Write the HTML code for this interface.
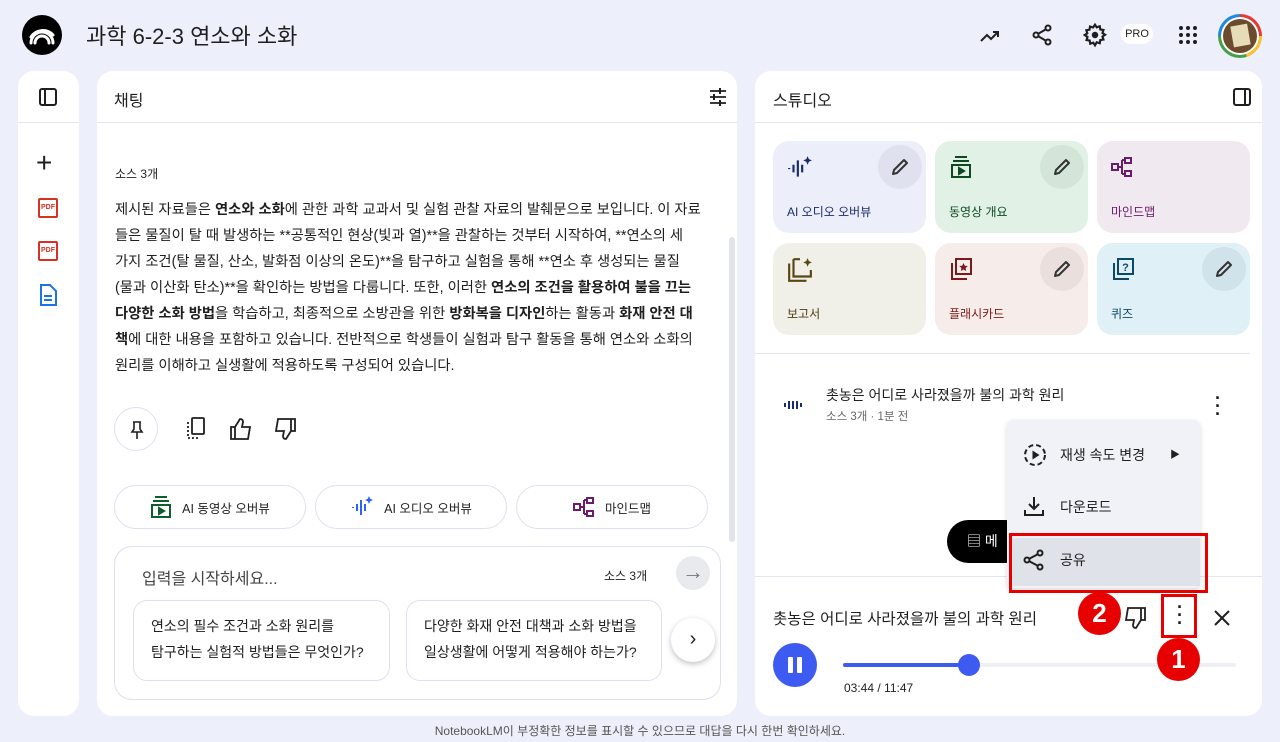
<!DOCTYPE html>
<html><head><meta charset="utf-8"><style>
*{box-sizing:border-box;margin:0;padding:0}
body{width:1280px;height:742px;background:#edeffa;font-family:"Liberation Sans","Noto Sans CJK KR",sans-serif;color:#1f1f1f;position:relative;overflow:hidden}
.a{position:absolute}
.panel{position:absolute;background:#fff;border-radius:16px;overflow:hidden}
.hdr{position:absolute;left:0;right:0;top:0;height:52px;border-bottom:1px solid #e3e6ef}
.card{position:absolute;width:153px;height:92px;border-radius:16px}
.card .lb{position:absolute;left:14px;top:62px;font-size:12px}
.card .ed{position:absolute;right:4px;top:4px;width:44px;height:44px;border-radius:50%}
.card .ed svg{position:absolute;left:13px;top:13px}
.pill{position:absolute;top:485px;height:44px;width:192px;border:1px solid #dde1ee;border-radius:22px;font-size:12.5px;display:flex;align-items:center;justify-content:center;gap:10px}
.line{white-space:nowrap}
b{font-weight:700}
</style></head><body>

<!-- top bar -->
<div class="a" style="left:22px;top:15px;width:40px;height:40px;border-radius:50%;background:#000">
<svg width="40" height="40" viewBox="0 0 40 40"><g fill="none" stroke="#fff" stroke-width="3" stroke-linecap="round"><path d="M9 28 A11 11 0 0 1 31 28"/><path d="M13 28 A7 7 0 0 1 27 28"/><path d="M9 22 A14 14 0 0 1 31 20"/></g></svg></div>
<div class="a" style="left:86px;top:19px;font-size:22px;color:#1f1f1f">과학 6-2-3 연소와 소화</div>
<svg class="a" style="left:978px;top:24px" width="24" height="24" viewBox="0 0 24 24"><path d="M3 17l6-6 4 4 7-7M15 8h5v5" fill="none" stroke="#1f1f1f" stroke-width="2"/></svg>
<svg class="a" style="left:1030px;top:23px" width="24" height="24" viewBox="0 0 24 24"><g fill="none" stroke="#1f1f1f" stroke-width="2"><circle cx="18" cy="5" r="2.5"/><circle cx="6" cy="12" r="2.5"/><circle cx="18" cy="19" r="2.5"/><path d="M8.2 10.8l7.6-4.4M8.2 13.2l7.6 4.4"/></g></svg>
<svg class="a" style="left:1082px;top:22px" width="26" height="26" viewBox="0 0 24 24"><path fill="none" stroke="#1f1f1f" stroke-width="2" d="M12 2.5l1.6 2.4 2.8-.9.5 2.9 2.9.5-.9 2.8 2.4 1.6-2.4 1.6.9 2.8-2.9.5-.5 2.9-2.8-.9L12 21.5l-1.6-2.4-2.8.9-.5-2.9-2.9-.5.9-2.8L2.5 12l2.4-1.6-.9-2.8 2.9-.5.5-2.9 2.8.9z"/><circle cx="12" cy="12" r="3" fill="#1f1f1f"/></svg>
<div class="a" style="left:1121px;top:24px;width:32px;height:20px;border-radius:10px;background:#fff;font-size:11px;line-height:20px;text-align:center">PRO</div>
<svg class="a" style="left:1178px;top:25px" width="20" height="20" viewBox="0 0 20 20" fill="#1f1f1f"><circle cx="3" cy="3" r="2"/><circle cx="10" cy="3" r="2"/><circle cx="17" cy="3" r="2"/><circle cx="3" cy="10" r="2"/><circle cx="10" cy="10" r="2"/><circle cx="17" cy="10" r="2"/><circle cx="3" cy="17" r="2"/><circle cx="10" cy="17" r="2"/><circle cx="17" cy="17" r="2"/></svg>
<div class="a" style="left:1218px;top:14px;width:44px;height:44px;border-radius:50%;background:conic-gradient(#e53935 0 25%,#fbc02d 25% 45%,#43a047 45% 75%,#1e88e5 75%)"></div>
<div class="a" style="left:1221px;top:17px;width:38px;height:38px;border-radius:50%;background:#fff"></div>
<div class="a" style="left:1223px;top:19px;width:34px;height:34px;border-radius:50%;background:#6b4a2e"><div class="a" style="left:9px;top:6px;width:17px;height:21px;background:#e6dcb8;transform:rotate(-10deg)"></div></div>

<!-- left panel -->
<div class="panel" style="left:18px;top:71px;width:61px;height:645px">
<div class="hdr"></div>
<svg class="a" style="left:21px;top:17px" width="18" height="18" viewBox="0 0 18 18"><rect x="1" y="1" width="16" height="16" rx="2" fill="none" stroke="#1f1f1f" stroke-width="2"/><path d="M6 1v16" stroke="#1f1f1f" stroke-width="2"/></svg>
<div class="a" style="left:18px;top:78px;font-size:28px;line-height:28px;font-weight:300">+</div>
<div class="a" style="left:20px;top:127px;width:20px;height:20px;border:2px solid #d93025;border-radius:2px;color:#d93025;font-size:7px;font-weight:700;line-height:16px;text-align:center">PDF</div>
<div class="a" style="left:20px;top:170px;width:20px;height:20px;border:2px solid #d93025;border-radius:2px;color:#d93025;font-size:7px;font-weight:700;line-height:16px;text-align:center">PDF</div>
<svg class="a" style="left:21px;top:213px" width="18" height="22" viewBox="0 0 18 22"><path d="M2 1h9l6 6v14H2z" fill="none" stroke="#1a73e8" stroke-width="2"/><path d="M5 12h8M5 16h8" stroke="#1a73e8" stroke-width="2"/></svg>
</div>

<!-- chat panel -->
<div class="panel" style="left:97px;top:71px;width:640px;height:645px">
<div class="hdr"></div>
<div class="a" style="left:17px;top:16px;font-size:16px">채팅</div>
<svg class="a" style="left:611px;top:16px" width="20" height="20" viewBox="0 0 20 20" stroke="#1f1f1f" stroke-width="1.8"><path d="M2 4h16M2 10h16M2 16h16"/><path d="M12 1v6M6 7v6M12 13v6" stroke-width="2"/></svg>
<div class="a" style="left:632px;top:166px;width:6px;height:305px;border-radius:3px;background:#dfe3ec"></div>
<div class="a" style="left:18px;top:94px;font-size:12px">소스 3개</div>
<div class="a" style="left:18px;top:126px;font-size:14.3px;line-height:26px">
<div class="line">제시된 자료들은 <b>연소와 소화</b>에 관한 과학 교과서 및 실험 관찰 자료의 발췌문으로 보입니다. 이 자료</div>
<div class="line">들은 물질이 탈 때 발생하는 **공통적인 현상(빛과 열)**을 관찰하는 것부터 시작하여, **연소의 세</div>
<div class="line">가지 조건(탈 물질, 산소, 발화점 이상의 온도)**을 탐구하고 실험을 통해 **연소 후 생성되는 물질</div>
<div class="line">(물과 이산화 탄소)**을 확인하는 방법을 다룹니다. 또한, 이러한 <b>연소의 조건을 활용하여 불을 끄는</b></div>
<div class="line"><b>다양한 소화 방법</b>을 학습하고, 최종적으로 소방관을 위한 <b>방화복을 디자인</b>하는 활동과 <b>화재 안전 대</b></div>
<div class="line"><b>책</b>에 대한 내용을 포함하고 있습니다. 전반적으로 학생들이 실험과 탐구 활동을 통해 연소와 소화의</div>
<div class="line">원리를 이해하고 실생활에 적용하도록 구성되어 있습니다.</div>
</div>
<div class="a" style="left:17px;top:336px;width:44px;height:44px;border:1px solid #dde1ee;border-radius:50%"><svg class="a" style="left:14px;top:12px" width="16" height="20" viewBox="0 0 16 20" fill="none" stroke="#1f1f1f" stroke-width="1.6"><path d="M4 2h8M5 2v7l-2 3h10l-2-3V2M8 12v7"/></svg></div>
<svg class="a" style="left:88px;top:346px" width="22" height="24" viewBox="0 0 22 24" fill="none" stroke="#1f1f1f" stroke-width="1.8"><rect x="7" y="1" width="12" height="16" rx="1"/><path d="M3 5v16h11" stroke-dasharray="2 2"/></svg>
<svg class="a" style="left:132px;top:346px" width="24" height="24" viewBox="0 0 24 24" fill="none" stroke="#1f1f1f" stroke-width="1.8"><path d="M2 10h4v12H2zM6 10l5-8c2 0 3 1 3 3l-1 5h8l-2 12H6"/></svg>
<svg class="a" style="left:176px;top:346px" width="24" height="24" viewBox="0 0 24 24" fill="none" stroke="#1f1f1f" stroke-width="1.8"><path d="M22 14h-4V2h4zM18 14l-5 8c-2 0-3-1-3-3l1-5H3L5 2h13"/></svg>
</div>
<div class="pill" style="left:114px"><svg width="22" height="24" viewBox="0 0 22 24" fill="none" stroke="#0d5e2a" stroke-width="2"><path d="M5 2h12M3 6h16"/><rect x="2" y="10" width="18" height="12"/><path d="M9 13v6l5-3z" fill="#0d5e2a"/></svg>AI 동영상 오버뷰</div>
<div class="pill" style="left:315px"><svg width="24" height="24" viewBox="0 0 24 24" stroke="#2962ff" stroke-width="2"><path d="M3 12v1M7 9v7M11 5v15M15 9v7"/><path d="M19 1l1.2 2.8L23 5l-2.8 1.2L19 9l-1.2-2.8L15 5l2.8-1.2z" fill="#2962ff" stroke="none"/></svg>AI 오디오 오버뷰</div>
<div class="pill" style="left:516px"><svg width="22" height="22" viewBox="0 0 22 22" fill="none" stroke="#6a1b6a" stroke-width="2"><rect x="1" y="8" width="6" height="6"/><rect x="14" y="2" width="6" height="5"/><rect x="14" y="15" width="6" height="5"/><path d="M7 11h4M11 4v14M11 4h3M11 18h3"/></svg>마인드맵</div>
<div class="a" style="left:114px;top:546px;width:607px;height:154px;border:1px solid #dde1ee;border-radius:18px">
<div class="a" style="left:27px;top:18px;font-size:16px;color:#444">입력을 시작하세요...</div>
<div class="a" style="left:489px;top:20px;font-size:12px">소스 3개</div>
<div class="a" style="left:561px;top:9px;width:34px;height:34px;border-radius:50%;background:#e9eaee;color:#777;font-size:22px;text-align:center;line-height:32px">→</div>
<div class="a" style="left:18px;top:53px;width:257px;height:81px;border:1px solid #dde1ee;border-radius:14px;padding:12px 17px;font-size:14px;line-height:26px">연소의 필수 조건과 소화 원리를<br>탐구하는 실험적 방법들은 무엇인가?</div>
<div class="a" style="left:291px;top:53px;width:256px;height:81px;border:1px solid #dde1ee;border-radius:14px;padding:12px 17px;font-size:14px;line-height:26px;white-space:nowrap;overflow:hidden">다양한 화재 안전 대책과 소화 방법을<br>일상생활에 어떻게 적용해야 하는가?</div>
<div class="a" style="left:556px;top:71px;width:44px;height:44px;border-radius:50%;background:#fff;box-shadow:0 2px 6px rgba(0,0,0,.25);font-size:20px;text-align:center;line-height:42px">›</div>
</div>

<!-- studio panel -->
<div class="panel" style="left:755px;top:71px;width:507px;height:645px">
<div class="hdr"></div>
<div class="a" style="left:18px;top:16px;font-size:16px">스튜디오</div>
<svg class="a" style="left:478px;top:17px" width="18" height="18" viewBox="0 0 18 18"><rect x="1" y="1" width="16" height="16" rx="2" fill="none" stroke="#1f1f1f" stroke-width="2"/><path d="M12 1v16" stroke="#1f1f1f" stroke-width="2"/></svg>

<div class="card" style="left:18px;top:70px;background:#eceffa;color:#1a2c6b"><svg class="a" style="left:14px;top:14px" width="26" height="26" viewBox="0 0 24 24" stroke="#1a2c6b" stroke-width="2"><path d="M2 12v1M6 9v7M10 5v15M14 9v7"/><path d="M19 1l1.2 2.8L23 5l-2.8 1.2L19 9l-1.2-2.8L15 5l2.8-1.2z" fill="#1a2c6b" stroke="none"/></svg><div class="ed" style="background:#dfe2ee"><svg width="18" height="18" viewBox="0 0 18 18"><path d="M2 16l1-4L13 2l3 3L6 15z" fill="none" stroke="#333" stroke-width="2" stroke-linejoin="round"/></svg></div><div class="lb">AI 오디오 오버뷰</div></div>
<div class="card" style="left:180px;top:70px;background:#e2f1e6;color:#0d4a22"><svg class="a" style="left:14px;top:14px" width="24" height="24" viewBox="0 0 22 24" fill="none" stroke="#0d4a22" stroke-width="2"><path d="M5 2h12M3 6h16"/><rect x="2" y="10" width="18" height="12"/><path d="M9 13v6l5-3z" fill="#0d4a22"/></svg><div class="ed" style="background:#d3e5d8"><svg width="18" height="18" viewBox="0 0 18 18"><path d="M2 16l1-4L13 2l3 3L6 15z" fill="none" stroke="#333" stroke-width="2" stroke-linejoin="round"/></svg></div><div class="lb">동영상 개요</div></div>
<div class="card" style="left:342px;top:70px;background:#f1e9f0;color:#6a1b6a"><svg class="a" style="left:14px;top:15px" width="22" height="22" viewBox="0 0 22 22" fill="none" stroke="#6a1b6a" stroke-width="2"><rect x="1" y="8" width="6" height="6"/><rect x="14" y="2" width="6" height="5"/><rect x="14" y="15" width="6" height="5"/><path d="M7 11h4M11 4v14M11 4h3M11 18h3"/></svg><div class="lb">마인드맵</div></div>
<div class="card" style="left:18px;top:172px;background:#f1f0e8;color:#4f3d10"><svg class="a" style="left:14px;top:14px" width="26" height="26" viewBox="0 0 24 24" fill="none" stroke="#5a4614" stroke-width="2"><path d="M2 6v16h16M6 2v16h16v-6M6 2h6"/><path d="M19 1l1.2 2.8L23 5l-2.8 1.2L19 9l-1.2-2.8L15 5l2.8-1.2z" fill="#5a4614" stroke="none"/></svg><div class="lb">보고서</div></div>
<div class="card" style="left:180px;top:172px;background:#f6ece9;color:#7a1a1a"><svg class="a" style="left:14px;top:14px" width="24" height="24" viewBox="0 0 24 24" fill="none" stroke="#7a1a1a" stroke-width="2"><rect x="7" y="2" width="15" height="15"/><path d="M3 6v16h15"/><path d="M14.5 6l1.3 2.7 3 .3-2.2 2 .6 3-2.7-1.5-2.7 1.5.6-3-2.2-2 3-.3z" fill="#7a1a1a" stroke="none"/></svg><div class="ed" style="background:#eadfdc"><svg width="18" height="18" viewBox="0 0 18 18"><path d="M2 16l1-4L13 2l3 3L6 15z" fill="none" stroke="#333" stroke-width="2" stroke-linejoin="round"/></svg></div><div class="lb">플래시카드</div></div>
<div class="card" style="left:342px;top:172px;background:#dff0f6;color:#0b4a66"><svg class="a" style="left:14px;top:14px" width="24" height="24" viewBox="0 0 24 24" fill="none" stroke="#0b4a66" stroke-width="2"><rect x="7" y="2" width="15" height="15"/><path d="M3 6v16h15"/><text x="14.5" y="14" font-size="11" font-weight="700" text-anchor="middle" fill="#0b4a66" stroke="none" font-family="Liberation Sans">?</text></svg><div class="ed" style="background:#d0e2ea"><svg width="18" height="18" viewBox="0 0 18 18"><path d="M2 16l1-4L13 2l3 3L6 15z" fill="none" stroke="#333" stroke-width="2" stroke-linejoin="round"/></svg></div><div class="lb">퀴즈</div></div>

<div class="a" style="left:0;right:12px;top:282px;height:1px;background:#e3e6ef"></div>
<svg class="a" style="left:29px;top:329px" width="18" height="10" viewBox="0 0 18 10" stroke="#1a2c6b" stroke-width="2"><path d="M1 3v4M5 1v8M9 1v8M13 1v8M17 3v4"/></svg>
<div class="a" style="left:71px;top:314px;font-size:14px">촛농은 어디로 사라졌을까 불의 과학 원리</div>
<div class="a" style="left:71px;top:337px;font-size:11.5px;color:#666">소스 3개 · 1분 전</div>
<div class="a" style="left:460px;top:323px;font-size:18px;font-weight:700;line-height:8px;width:6px;text-align:center">·<br>·<br>·</div>
<div class="a" style="left:192px;top:449px;width:80px;height:43px;border-radius:22px;background:#000;color:#fff;font-size:14px;line-height:43px;padding-left:20px">▤ 메</div>
<div class="a" style="left:0;right:0;top:505px;height:1px;background:#e3e6ef"></div>
<div class="a" style="left:18px;top:536px;font-size:15.5px">촛농은 어디로 사라졌을까 불의 과학 원리</div>
<svg class="a" style="left:368px;top:535px" width="24" height="24" viewBox="0 0 24 24" fill="none" stroke="#1f1f1f" stroke-width="1.8"><path d="M22 14h-4V2h4zM18 14l-5 8c-2 0-3-1-3-3l1-5H3L5 2h13"/></svg>
<svg class="a" style="left:458px;top:538px" width="18" height="18" viewBox="0 0 18 18"><path d="M2 2l14 14M16 2L2 16" stroke="#1f1f1f" stroke-width="2"/></svg>
<div class="a" style="left:18px;top:572px;width:44px;height:44px;border-radius:50%;background:#3d5af1"><div class="a" style="left:15px;top:14px;width:5px;height:16px;background:#fff;border-radius:1px"></div><div class="a" style="left:24px;top:14px;width:5px;height:16px;background:#fff;border-radius:1px"></div></div>
<div class="a" style="left:88px;top:592px;width:393px;height:4px;border-radius:2px;background:#eef0f6"></div>
<div class="a" style="left:88px;top:592px;width:128px;height:4px;border-radius:2px;background:#3d5af1"></div>
<div class="a" style="left:203px;top:583px;width:22px;height:22px;border-radius:50%;background:#3d5af1"></div>
<div class="a" style="left:89px;top:610px;font-size:12px">03:44 / 11:47</div>
</div>

<!-- menu -->
<div class="a" style="left:1007px;top:420px;width:193px;height:168px;background:#f0f2f7;border-radius:6px;box-shadow:0 2px 6px rgba(0,0,0,.15)">
<svg class="a" style="left:16px;top:23px" width="24" height="24" viewBox="0 0 24 24"><circle cx="12" cy="12" r="10" fill="none" stroke="#1f1f1f" stroke-width="2" stroke-dasharray="5 3"/><path d="M9.5 7.5v9l7-4.5z" fill="#1f1f1f"/></svg>
<div class="a" style="left:53px;top:25px;font-size:14px">재생 속도 변경</div>
<div class="a" style="left:163px;top:26px;font-size:10px">▶</div>
<svg class="a" style="left:16px;top:75px" width="22" height="22" viewBox="0 0 22 22" fill="none" stroke="#1f1f1f" stroke-width="2"><path d="M11 2v12M6 9l5 5 5-5M2 15v5h18v-5"/></svg>
<div class="a" style="left:53px;top:77px;font-size:14px">다운로드</div>
<div class="a" style="left:5px;top:118px;width:188px;height:48px;background:#dfe2e8"></div>
<svg class="a" style="left:15px;top:128px" width="24" height="24" viewBox="0 0 24 24"><g fill="none" stroke="#1f1f1f" stroke-width="2"><circle cx="18" cy="5" r="2.5"/><circle cx="5" cy="12" r="2.5"/><circle cx="18" cy="19" r="2.5"/><path d="M7.2 10.8l8.6-4.6M7.2 13.2l8.6 4.6"/></g></svg>
<div class="a" style="left:53px;top:130px;font-size:14px">공유</div>
</div>
<div class="a" style="left:1009px;top:533px;width:199px;height:60px;border:3px solid #e60000"></div>
<div class="a" style="left:1161px;top:594px;width:36px;height:44px;border:3px solid #e60000"><div class="a" style="left:13px;top:6px;font-size:18px;font-weight:700;line-height:8px">·<br>·<br>·</div></div>
<div class="a" style="left:1078px;top:592px;width:43px;height:43px;border-radius:50%;background:#e60000;color:#fff;font-size:26px;font-weight:700;text-align:center;line-height:43px">2</div>
<div class="a" style="left:1157px;top:638px;width:43px;height:43px;border-radius:50%;background:#e60000;color:#fff;font-size:26px;font-weight:700;text-align:center;line-height:43px">1</div>

<div class="a" style="left:0;width:1280px;top:722px;text-align:center;font-size:12px;color:#555">NotebookLM이 부정확한 정보를 표시할 수 있으므로 대답을 다시 한번 확인하세요.</div>
</body></html>
